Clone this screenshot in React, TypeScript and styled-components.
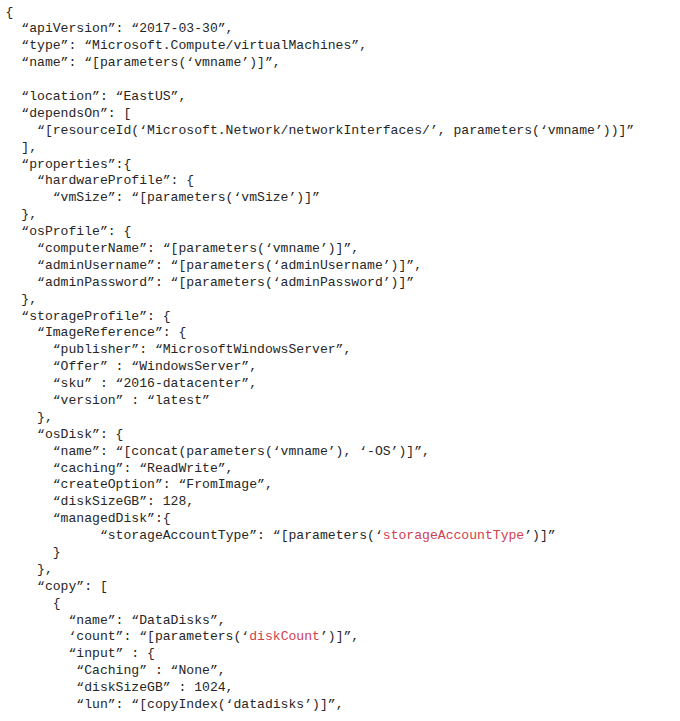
import React from "react";
import styled, { createGlobalStyle } from "styled-components";

const GlobalStyle = createGlobalStyle`
  html, body {
    margin: 0;
    padding: 0;
    background: #ffffff;
  }
`;

const Listing = styled.div`
  display: flex;
  flex-direction: column;
  padding: 4.5px 0 0 5.6px;
  font-family: "Liberation Mono", "Courier New", monospace;
  font-size: 13.1px;
  line-height: 16.9px;
  color: #262626;
  background: #ffffff;
`;

const Line = styled.div<{ $indent: number }>`
  white-space: pre;
  height: 16.9px;
  padding-left: ${(p) => p.$indent * 0.6}em;
`;

const Accent = styled.span`
  color: #d0404e;
`;

type Seg = string | { red: string };
type Row = [number, Seg[]];

const rows: Row[] = [
  [0, ["{"]],
  [2, ["“apiVersion”: “2017-03-30”,"]],
  [2, ["“type”: “Microsoft.Compute/virtualMachines”,"]],
  [2, ["“name”: “[parameters(‘vmname’)]”,"]],
  [0, [""]],
  [2, ["“location”: “EastUS”,"]],
  [2, ["“dependsOn”: ["]],
  [4, ["“[resourceId(‘Microsoft.Network/networkInterfaces/’, parameters(‘vmname’))]”"]],
  [2, ["],"]],
  [2, ["“properties”:{"]],
  [4, ["“hardwareProfile”: {"]],
  [6, ["“vmSize”: “[parameters(‘vmSize’)]”"]],
  [2, ["},"]],
  [2, ["“osProfile”: {"]],
  [4, ["“computerName”: “[parameters(‘vmname’)]”,"]],
  [4, ["“adminUsername”: “[parameters(‘adminUsername’)]”,"]],
  [4, ["“adminPassword”: “[parameters(‘adminPassword’)]”"]],
  [2, ["},"]],
  [2, ["“storageProfile”: {"]],
  [4, ["“ImageReference”: {"]],
  [6, ["“publisher”: “MicrosoftWindowsServer”,"]],
  [6, ["“Offer” : “WindowsServer”,"]],
  [6, ["“sku” : “2016-datacenter”,"]],
  [6, ["“version” : “latest”"]],
  [4, ["},"]],
  [4, ["“osDisk”: {"]],
  [6, ["“name”: “[concat(parameters(‘vmname’), ‘-OS’)]”,"]],
  [6, ["“caching”: “ReadWrite”,"]],
  [6, ["“createOption”: “FromImage”,"]],
  [6, ["“diskSizeGB”: 128,"]],
  [6, ["“managedDisk”:{"]],
  [12, ["“storageAccountType”: “[parameters(‘", { red: "storageAccountType" }, "’)]”"]],
  [6, ["}"]],
  [4, ["},"]],
  [4, ["“copy”: ["]],
  [6, ["{"]],
  [8, ["“name”: “DataDisks”,"]],
  [8, ["‘count”: “[parameters(‘", { red: "diskCount" }, "’)]”,"]],
  [8, ["“input” : {"]],
  [9, ["“Caching” : “None”,"]],
  [9, ["“diskSizeGB” : 1024,"]],
  [9, ["“lun”: “[copyIndex(‘datadisks’)]”,"]],
];

export default function App() {
  return (
    <>
      <GlobalStyle />
      <Listing>
        {rows.map(([indent, segs], i) => (
          <Line key={i} $indent={indent}>
            {segs.map((s, j) =>
              typeof s === "string" ? (
                <React.Fragment key={j}>{s}</React.Fragment>
              ) : (
                <Accent key={j}>{s.red}</Accent>
              )
            )}
          </Line>
        ))}
      </Listing>
    </>
  );
}
